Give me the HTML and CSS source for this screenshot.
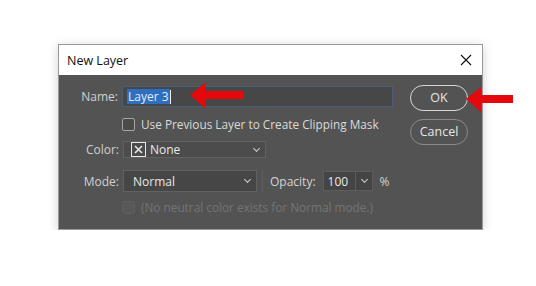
FILE: index.html
```html
<!DOCTYPE html>
<html lang="en">
  <head>
    <meta charset="UTF-8" />
    <title>New Layer</title>
    <link rel="stylesheet" href="styles.css">
  </head>
  <body>
    <div class="dialog">
      <div class="titlebar">
        <span class="title">New Layer</span>
        <svg class="close" width="12" height="12" viewBox="0 0 12 12">
          <path d="M1 1L11 11M11 1L1 11" stroke="#111" stroke-width="1.1" fill="none" />
        </svg>
      </div>

      <div class="body">
        <div class="fields">
          <div class="row row-name">
            <label class="label">Name:</label>
            <div class="input name-input"><span class="sel">Layer 3</span><span class="caret"></span></div>
          </div>

          <div class="row row-check">
            <span class="box"></span>
            <span class="text">Use Previous Layer to Create Clipping Mask</span>
          </div>

          <div class="row row-color">
            <label class="label">Color:</label>
            <div class="select color-select">
              <svg class="nocolor" width="15" height="15" viewBox="0 0 15 15">
                <rect x="0.5" y="0.5" width="14" height="14" fill="none" stroke="#e8e8e8" />
                <path d="M4 4L11 11M11 4L4 11" stroke="#e8e8e8" stroke-width="1.6" />
              </svg>
              <span class="value">None</span>
              <span class="chev"></span>
            </div>
          </div>

          <div class="row row-mode">
            <label class="label">Mode:</label>
            <div class="select mode-select">
              <span class="value">Normal</span>
              <span class="chev"></span>
            </div>
            <span class="sep"></span>
            <span class="text opacity-label">Opacity:</span>
            <div class="opacity">
              <span class="num">100</span>
              <span class="drop"><span class="chev"></span></span>
            </div>
            <span class="text pct">%</span>
          </div>

          <div class="row row-check disabled">
            <span class="box"></span>
            <span class="text">(No neutral color exists for Normal mode.)</span>
          </div>
        </div>

        <div class="buttons">
          <div class="btn btn-ok">OK</div>
          <div class="btn">Cancel</div>
        </div>
      </div>

      <!-- red callout arrows over the dialog -->
      <svg class="arrow arrow-name" width="60" height="30" viewBox="0 0 60 30">
        <path d="M2 14L17 2L17 10L55 10L55 18L17 18L17 27Z" fill="#e5080c" />
      </svg>
      <svg class="arrow arrow-ok" width="52" height="30" viewBox="0 0 52 30">
        <path d="M2 15L17 3L17 11L49 11L49 19L17 19L17 28Z" fill="#e5080c" />
      </svg>
    </div>
  </body>
</html>
```

FILE: styles.css
```css
body {
  margin: 0;
  background: #fff;
  font-family: "Open Sans", "Noto Sans", sans-serif;
  font-size: 12px;
}

.dialog {
  position: relative;
  width: 423px;
  margin: 44px 0 0 58px;
  border: 1px solid #9a9a9a;
  box-shadow: 0 2px 10px rgba(0, 0, 0, 0.18);
}

.titlebar {
  height: 30px;
  background: #fff;
  display: flex;
  align-items: center;
  justify-content: space-between;
  padding: 0 10px 0 8px;
}

.title {
  font-size: 12.5px;
  color: #111;
}

.body {
  background: #535353;
  height: 154px;
  display: flex;
  color: #d4d4d4;
}

.fields {
  width: 312px;
  flex-shrink: 0;
  padding: 11px 0 0 22px;
}

.row {
  display: flex;
  align-items: center;
  white-space: nowrap;
}

.label {
  width: 38px;
  text-align: right;
  margin-right: 4px;
  color: #d0d0d0;
}

.row-name {
  height: 21px;
}

.name-input {
  width: 265px;
  height: 19px;
  flex-shrink: 0;
  background: #474747;
  border: 1px solid #4a6079;
  display: flex;
  align-items: center;
  padding-left: 4px;
}

.sel {
  background: #2f6fc0;
  color: #e2ecf8;
  padding: 0 1px;
  line-height: 15px;
}

.caret {
  width: 1px;
  height: 14px;
  background: #eee;
}

.row-check {
  height: 14px;
  margin-top: 10px;
  padding-left: 41px;
  font-size: 11.8px;
}

.box {
  width: 11px;
  height: 11px;
  border: 1px solid #a6a6a6;
  border-radius: 2px;
  background: #4b4b4b;
  margin-right: 6px;
}

.row-check .text {
  color: #dadada;
}

.row-color {
  height: 17px;
  margin-top: 10px;
}

.select {
  height: 100%;
  display: flex;
  align-items: center;
  box-sizing: border-box;
  border: 1px solid #626262;
  position: relative;
  flex-shrink: 0;
}

.color-select {
  width: 143px;
  background: #4c4c4c;
  padding-left: 7px;
}

.nocolor {
  margin-right: 4px;
}

.value {
  color: #e8e8e8;
}

.chev {
  width: 4px;
  height: 4px;
  border-right: 1px solid #cfcfcf;
  border-bottom: 1px solid #cfcfcf;
  transform: rotate(45deg);
  position: absolute;
  right: 6px;
  top: 50%;
  margin-top: -4px;
}

.row-mode {
  height: 22px;
  margin-top: 12px;
}

.mode-select {
  width: 134px;
  background: #464646;
  padding-left: 9px;
}

.sep {
  width: 1px;
  height: 22px;
  background: #5e5e5e;
  margin: 0 7px 0 5px;
}

.opacity-label {
  margin-right: 7px;
}

.opacity {
  width: 50px;
  height: 20px;
  flex-shrink: 0;
  box-sizing: border-box;
  background: #444;
  border: 1px solid #5c5c5c;
  display: flex;
  align-items: center;
}

.num {
  flex: 1;
  padding-left: 4px;
  color: #e8e8e8;
}

.drop {
  width: 16px;
  height: 100%;
  border-left: 1px solid #5c5c5c;
  position: relative;
}

.drop .chev {
  right: 5px;
}

.pct {
  margin-left: 7px;
}

.disabled {
  margin-top: 8px;
}

.disabled .box {
  border-color: #5e5e5e;
  background: #585858;
}

.disabled .text {
  color: #747474;
}

.buttons {
  padding: 10px 0 0 17px;
  display: flex;
  flex-direction: column;
  gap: 8px;
}

.btn {
  width: 58px;
  height: 26px;
  box-sizing: border-box;
  border: 1px solid #8a8a8a;
  border-radius: 13px;
  text-align: center;
  line-height: 24px;
  color: #e6e6e6;
  font-size: 12.5px;
}

.btn-ok {
  border: 1.5px solid #d6d6d6;
}

.arrow {
  position: absolute;
  filter: blur(0.6px);
}

.arrow-name {
  left: 129px;
  top: 36px;
}

.arrow-ok {
  left: 405px;
  top: 39px;
}
```
